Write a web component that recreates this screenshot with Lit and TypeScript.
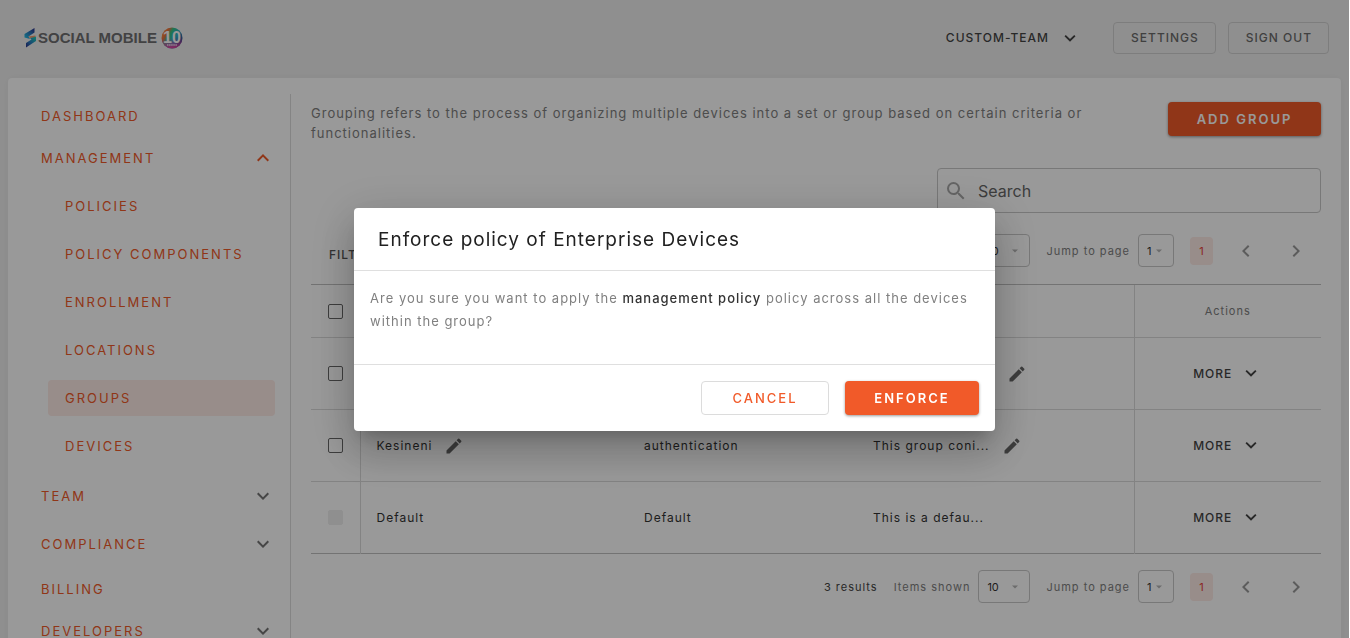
import { LitElement, html, css, svg, nothing } from "lit";
import { customElement } from "lit/decorators.js";
import { classMap } from "lit/directives/class-map.js";

const base = css`
  *,
  *::before,
  *::after {
    box-sizing: border-box;
  }
  button,
  input,
  select {
    font: inherit;
    color: inherit;
    letter-spacing: inherit;
    margin: 0;
    padding: 0;
    border: 0;
    background: none;
  }
  button {
    cursor: pointer;
  }
  svg {
    display: block;
    flex: none;
  }
  a {
    color: inherit;
    text-decoration: none;
  }
`;

const ICONS = {
  down: svg`<path d="M7.4 8.6 12 13.2l4.6-4.6L18 10l-6 6-6-6z" />`,
  up: svg`<path d="M7.4 15.4 12 10.8l4.6 4.6L18 14l-6-6-6 6z" />`,
  left: svg`<path d="M15.4 7.4 14 6l-6 6 6 6 1.4-1.4-4.6-4.6z" />`,
  right: svg`<path d="M8.6 7.4 10 6l6 6-6 6-1.4-1.4 4.6-4.6z" />`,
  caret: svg`<path d="m6 9 6 6 6-6z" />`,
  search: svg`<path d="M15.5 14h-.79l-.28-.27A6.47 6.47 0 0 0 16 9.5 6.5 6.5 0 1 0 9.5 16c1.61 0 3.09-.59 4.23-1.57l.27.28v.79l5 4.99L20.49 19zm-6 0C7.01 14 5 11.99 5 9.5S7.01 5 9.5 5 14 7.01 14 9.5 11.99 14 9.5 14" />`,
  edit: svg`<path d="M3 17.25V21h3.75L17.81 9.94l-3.75-3.75zM20.71 7.04c.39-.39.39-1.02 0-1.41l-2.34-2.34a.9959.9959 0 0 0-1.41 0l-1.83 1.83 3.75 3.75z" />`,
};

const icon = (name: keyof typeof ICONS, size = 24) =>
  html`<svg width=${size} height=${size} viewBox="0 0 24 24" fill="currentColor" aria-hidden="true">${ICONS[name]}</svg>`;

@customElement("brand-logo")
export class BrandLogo extends LitElement {
  static styles = [
    base,
    css`
      :host {
        display: flex;
        align-items: center;
        color: #6e6e70;
        letter-spacing: 0;
      }
      .name {
        font: 700 15px/20px "Liberation Sans", Arial, sans-serif;
        white-space: nowrap;
        margin: 0 4px 0 2px;
      }
    `,
  ];
  render() {
    return html`
      <svg width="12" height="20" viewBox="0 0 12 20" aria-hidden="true">
        <defs>
          <linearGradient id="top" x1="0" y1="1" x2="1" y2="0">
            <stop offset="0" stop-color="#22c8e8" />
            <stop offset="0.500" stop-color="#2a7fc0" />
            <stop offset="1" stop-color="#2b2c86" />
          </linearGradient>
          <linearGradient id="bottom" x1="0" y1="1" x2="1" y2="0">
            <stop offset="0" stop-color="#2b2c86" />
            <stop offset="0.450" stop-color="#2a7fc0" />
            <stop offset="1" stop-color="#18d6b8" />
          </linearGradient>
        </defs>
        <path d="M0.500 6 10.500 0V4.500L4.500 8.500 6 11 0.500 9.500z" fill="url(#top)" />
        <path d="M12 8.500V13L2 19.500V15L7.500 11.500 5.500 9.500z" fill="url(#bottom)" />
        <path d="M4.500 8.500 11.500 7.500 11 9 6 10z" fill="#f2996a" />
      </svg>
      <span class="name">SOCIAL MOBILE</span>
      <svg width="22" height="22" viewBox="0 0 22 22" aria-label="10 years" role="img">
        <defs>
          <linearGradient id="ring" x1="0" y1="0.200" x2="1" y2="0.800">
            <stop offset="0" stop-color="#f2a33c" />
            <stop offset="0.200" stop-color="#f0703c" />
            <stop offset="0.350" stop-color="#35c487" />
            <stop offset="0.600" stop-color="#2bb3c9" />
            <stop offset="1" stop-color="#3a1f7a" />
          </linearGradient>
          <linearGradient id="glow" x1="0" y1="0" x2="0" y2="1">
            <stop offset="0.500" stop-color="#e83ea0" stop-opacity="0" />
            <stop offset="1" stop-color="#e83ea0" />
          </linearGradient>
        </defs>
        <circle cx="11" cy="11" r="10.500" fill="url(#ring)" />
        <circle cx="11" cy="11" r="10.500" fill="url(#glow)" />
        <text x="11" y="16" text-anchor="middle" font-family="Liberation Sans" font-weight="700" font-size="16" fill="#fff">10</text>
        <path d="M6 18h10" stroke="#fff" stroke-opacity="0.600" stroke-width="2" stroke-dasharray="1.500 0.600" />
      </svg>
    `;
  }
}

interface NavItem {
  label: string;
  open?: boolean;
  expandable?: boolean;
  compact?: boolean;
  children?: { label: string; active?: boolean }[];
}

const NAV: NavItem[] = [
  { label: "DASHBOARD" },
  {
    label: "MANAGEMENT",
    expandable: true,
    open: true,
    compact: true,
    children: [
      { label: "POLICIES" },
      { label: "POLICY COMPONENTS" },
      { label: "ENROLLMENT" },
      { label: "LOCATIONS" },
      { label: "GROUPS", active: true },
      { label: "DEVICES" },
    ],
  },
  { label: "TEAM", expandable: true },
  { label: "COMPLIANCE", expandable: true },
  { label: "BILLING" },
  { label: "DEVELOPERS", expandable: true, compact: true },
];

@customElement("side-nav")
export class SideNav extends LitElement {
  static styles = [
    base,
    css`
      :host {
        display: block;
        color: #f15a29;
        font-size: 13px;
        line-height: 20px;
        font-weight: 400;
        letter-spacing: 2px;
      }
      .item {
        display: flex;
        align-items: center;
        justify-content: space-between;
        width: 100%;
        height: 42px;
        padding: 0 15px 0 33px;
        text-align: left;
      }
      .roomy {
        height: 48px;
      }
      .closed {
        color: #757575;
      }
      .sub {
        padding: 9px 15px 8px 40px;
        display: grid;
        gap: 12px;
      }
      .child {
        display: flex;
        align-items: center;
        height: 36px;
        padding-left: 17px;
        border-radius: 4px;
      }
      .active {
        background: #fdebe6;
      }
    `,
  ];
  render() {
    return html`<nav aria-label="Main">
      ${NAV.map((item) =>
        item.expandable
          ? html`<button
                class=${classMap({ item: true, roomy: !item.compact })}
                aria-expanded=${item.open ? "true" : "false"}
              >
                <span>${item.label}</span>
                <span class=${item.open ? "" : "closed"}>${icon(item.open ? "up" : "down")}</span>
              </button>
              ${item.children
                ? html`<div class="sub">
                    ${item.children.map(
                      (c) => html`<a href="#" class=${classMap({ child: true, active: !!c.active })}>${c.label}</a>`,
                    )}
                  </div>`
                : nothing}`
          : html`<a href="#" class="item">${item.label}</a>`,
      )}
    </nav>`;
  }
}

@customElement("page-bar")
export class PageBar extends LitElement {
  static styles = [
    base,
    css`
      :host {
        display: flex;
        align-items: center;
        justify-content: flex-end;
        font-size: 11px;
        line-height: 16px;
        letter-spacing: 1px;
        color: #808080;
        white-space: nowrap;
      }
      .results {
        color: #444;
        margin-right: 16px;
      }
      .field {
        display: flex;
        align-items: center;
        gap: 8px;
        margin-right: 16px;
      }
      .box {
        display: grid;
        align-items: center;
        width: 52px;
        height: 33px;
        border: 1px solid #c8c8c8;
        border-radius: 4px;
      }
      .small {
        width: 36px;
      }
      .box > * {
        grid-area: 1 / 1;
      }
      .box svg {
        justify-self: end;
        margin-right: 8px;
        color: #b4b4b4;
        pointer-events: none;
      }
      select {
        appearance: none;
        width: 100%;
        height: 100%;
        padding-left: 8px;
        font-size: 11px;
        letter-spacing: 0;
        color: #333;
      }
      .current {
        width: 23px;
        height: 28px;
        border-radius: 4px;
        background: #fdebe6;
        color: #e8423a;
        letter-spacing: 0;
      }
      .arrows {
        display: flex;
        gap: 26px;
        margin-left: 21px;
        padding-right: 13px;
        color: #999;
      }
    `,
  ];
  render() {
    return html`
      <span class="results">3 results</span>
      <label class="field">Items shown
        <span class="box"><select><option>10</option></select>${icon("caret", 12)}</span>
      </label>
      <label class="field">Jump to page
        <span class="box small"><select><option>1</option></select>${icon("caret", 12)}</span>
      </label>
      <button class="current" aria-current="page">1</button>
      <div class="arrows">
        <button aria-label="Previous page">${icon("left")}</button>
        <button aria-label="Next page">${icon("right")}</button>
      </div>
    `;
  }
}

interface Group {
  name: string;
  policy: string;
  description: string;
  editable: boolean;
}

const GROUPS: Group[] = [
  { name: "", policy: "", description: "", editable: true },
  { name: "Kesineni", policy: "authentication", description: "This group coni...", editable: true },
  { name: "Default", policy: "Default", description: "This is a defau...", editable: false },
];

@customElement("group-table")
export class GroupTable extends LitElement {
  static styles = [
    base,
    css`
      :host {
        display: block;
        font-size: 12px;
        line-height: 20px;
        letter-spacing: 1px;
        color: #333;
      }
      table {
        width: 100%;
        table-layout: fixed;
        border-collapse: collapse;
        border-top: 1px solid #c0c0c0;
        border-bottom: 1px solid #c0c0c0;
      }
      th,
      td {
        height: 72px;
        padding: 0 16px;
        text-align: left;
        border-top: 1px solid #dadada;
      }
      th {
        height: 53px;
        font-weight: 400;
        font-size: 11px;
        color: #808080;
        border-top-color: #c0c0c0;
      }
      .pick {
        width: 49px;
        border-right: 1px solid #dadada;
      }
      .name {
        width: 268px;
      }
      .policy {
        width: 229px;
      }
      .actions {
        width: 187px;
        text-align: center;
        border-left: 1px solid #dadada;
      }
      input {
        appearance: none;
        display: block;
        width: 15px;
        height: 15px;
        border: 1px solid #666;
        border-radius: 2px;
        margin-left: 1px;
      }
      input:disabled {
        border-color: #efefef;
        background: #efefef;
      }
      .cell {
        display: flex;
        align-items: center;
        gap: 12px;
      }
      .text:empty {
        min-width: 122px;
      }
      .edit {
        color: #666;
      }
      .more {
        display: inline-flex;
        align-items: center;
        gap: 8px;
        font-weight: 500;
        color: #444;
      }
      .more svg {
        margin-bottom: 2px;
      }
    `,
  ];
  private cell(text: string, editable: boolean) {
    return html`<div class="cell">
      <span class="text">${text}</span>
      ${editable ? html`<button class="edit" aria-label="Edit">${icon("edit", 20)}</button>` : nothing}
    </div>`;
  }
  render() {
    return html`<table>
      <thead>
        <tr>
          <th class="pick"><input type="checkbox" aria-label="Select all groups" /></th>
          <th class="name"></th>
          <th class="policy"></th>
          <th></th>
          <th class="actions">Actions</th>
        </tr>
      </thead>
      <tbody>
        ${GROUPS.map(
          (g) => html`<tr>
            <td class="pick">
              <input type="checkbox" aria-label="Select group" ?disabled=${!g.editable} />
            </td>
            <td>${this.cell(g.name, g.editable)}</td>
            <td>${g.policy}</td>
            <td>${this.cell(g.description, g.editable)}</td>
            <td class="actions"><button class="more">MORE ${icon("down", 22)}</button></td>
          </tr>`,
        )}
      </tbody>
    </table>`;
  }
}

@customElement("enforce-dialog")
export class EnforceDialog extends LitElement {
  static styles = [
    base,
    css`
      :host {
        position: fixed;
        inset: 0 1px 0 0;
        display: flex;
        align-items: center;
        justify-content: center;
        background: rgba(0, 0, 0, 0.4);
        letter-spacing: 1px;
      }
      .paper {
        width: 100%;
        max-width: 641px;
        background: #fff;
        border-radius: 4px;
        box-shadow: 0 11px 15px -7px rgba(0, 0, 0, 0.2), 0 24px 38px 3px rgba(0, 0, 0, 0.14),
          0 9px 46px 8px rgba(0, 0, 0, 0.12);
      }
      h2 {
        margin: 0;
        padding: 17px 24px 15px;
        font-size: 19px;
        line-height: 30px;
        font-weight: 400;
        color: #212121;
      }
      .body {
        border-top: 1px solid #dfdfdf;
        border-bottom: 1px solid #dfdfdf;
        padding: 16px 16px 31px;
        font-size: 13px;
        line-height: 23px;
        color: #808080;
      }
      .body p {
        margin: 0;
      }
      strong {
        font-weight: 500;
        color: #333;
      }
      .foot {
        display: flex;
        justify-content: flex-end;
        gap: 16px;
        padding: 16px;
      }
      .foot button {
        height: 34px;
        padding: 0 28px;
        border-radius: 4px;
        font-size: 13px;
        line-height: 20px;
        font-weight: 500;
        letter-spacing: 2px;
      }
      .foot .cancel {
        min-width: 128px;
        border: 1px solid #dcdcdc;
        color: #f15a29;
      }
      .foot .enforce {
        min-width: 134px;
        background: #f15a29;
        color: #fff;
        font-weight: 600;
        box-shadow: 0 1px 3px rgba(0, 0, 0, 0.4);
      }
    `,
  ];
  render() {
    return html`<section class="paper" role="dialog" aria-modal="true" aria-labelledby="title">
      <h2 id="title">Enforce policy of Enterprise Devices</h2>
      <div class="body">
        <p>
          Are you sure you want to apply the <strong>management policy</strong> policy across all the devices within
          the group?
        </p>
      </div>
      <div class="foot">
        <button class="cancel">CANCEL</button>
        <button class="enforce">ENFORCE</button>
      </div>
    </section>`;
  }
}

@customElement("app-root")
export class AppRoot extends LitElement {
  static styles = [
    base,
    css`
      :host {
        display: flex;
        flex-direction: column;
        height: 100vh;
        overflow: hidden;
        font-family: Inter, "Open Sans", sans-serif;
        border-right: 1px solid #fff;
        background: #efefef;
      }
      header {
        display: flex;
        align-items: center;
        flex: none;
        height: 78px;
        padding: 0 20px 2px 24px;
        font-size: 12px;
        line-height: 16px;
        font-weight: 500;
        letter-spacing: 1px;
      }
      .team {
        display: flex;
        align-items: center;
        gap: 10px;
        margin-left: auto;
        margin-right: 32px;
        color: #444;
      }
      .outline {
        height: 32px;
        min-width: 101px;
        padding: 0 16px 0 17px;
        border: 1px solid #d0d0d0;
        border-radius: 4px;
        color: #6b6b6b;
      }
      .outline + .outline {
        margin-left: 12px;
      }
      .card {
        flex: 1 0 auto;
        display: grid;
        grid-template-columns: 283px minmax(0, 1fr);
        align-items: start;
        margin: 0 8px;
        padding-top: 16px;
        background: #fff;
        border-radius: 4px 4px 0 0;
        box-shadow: 0 0 10px rgba(0, 0, 0, 0.04);
      }
      side-nav {
        border-right: 1px solid #dcdcdc;
        padding-top: 1px;
        align-self: stretch;
      }
      main {
        padding: 8px 20px 0;
      }
      .intro {
        display: flex;
        justify-content: space-between;
        align-items: flex-start;
      }
      .intro p {
        margin: 1px 0 0;
        max-width: 800px;
        font-size: 13px;
        line-height: 20px;
        letter-spacing: 1px;
        color: #808080;
      }
      .add {
        flex: none;
        height: 34px;
        min-width: 153px;
        border-radius: 4px;
        background: #f15a29;
        color: #fff;
        font-size: 13px;
        font-weight: 600;
        letter-spacing: 2px;
        box-shadow: 0 1px 3px rgba(0, 0, 0, 0.4);
      }
      .search {
        display: flex;
        align-items: center;
        gap: 10px;
        width: 384px;
        height: 45px;
        margin: 25px 0 0 auto;
        padding: 0 6px;
        border: 1px solid #c8c8c8;
        border-radius: 4px;
        color: #a8a8a8;
      }
      .search input {
        flex: 1;
        min-width: 0;
        font-size: 16px;
        line-height: 24px;
        outline: none;
      }
      .search input::placeholder {
        color: #666;
        opacity: 1;
      }
      .tools {
        display: flex;
        align-items: center;
        justify-content: space-between;
        height: 71px;
        padding-top: 4px;
      }
      .filters {
        padding: 16px 18px 8px;
        font-size: 12px;
        line-height: 16px;
        font-weight: 500;
        letter-spacing: 1px;
        color: #555;
      }
      .bottom {
        padding: 16px 0 32px;
      }
    `,
  ];
  render() {
    return html`
      <header>
        <brand-logo></brand-logo>
        <button class="team">CUSTOM-TEAM ${icon("down", 22)}</button>
        <button class="outline">SETTINGS</button>
        <button class="outline">SIGN OUT</button>
      </header>
      <div class="card">
        <side-nav></side-nav>
        <main>
          <div class="intro">
            <p>
              Grouping refers to the process of organizing multiple devices into a set or group based on certain
              criteria or functionalities.
            </p>
            <button class="add">ADD GROUP</button>
          </div>
          <label class="search">${icon("search")}<input type="search" placeholder="Search" aria-label="Search" /></label>
          <div class="tools">
            <button class="filters">FILTERS</button>
            <page-bar></page-bar>
          </div>
          <group-table></group-table>
          <page-bar class="bottom"></page-bar>
        </main>
      </div>
      <enforce-dialog></enforce-dialog>
    `;
  }
}
